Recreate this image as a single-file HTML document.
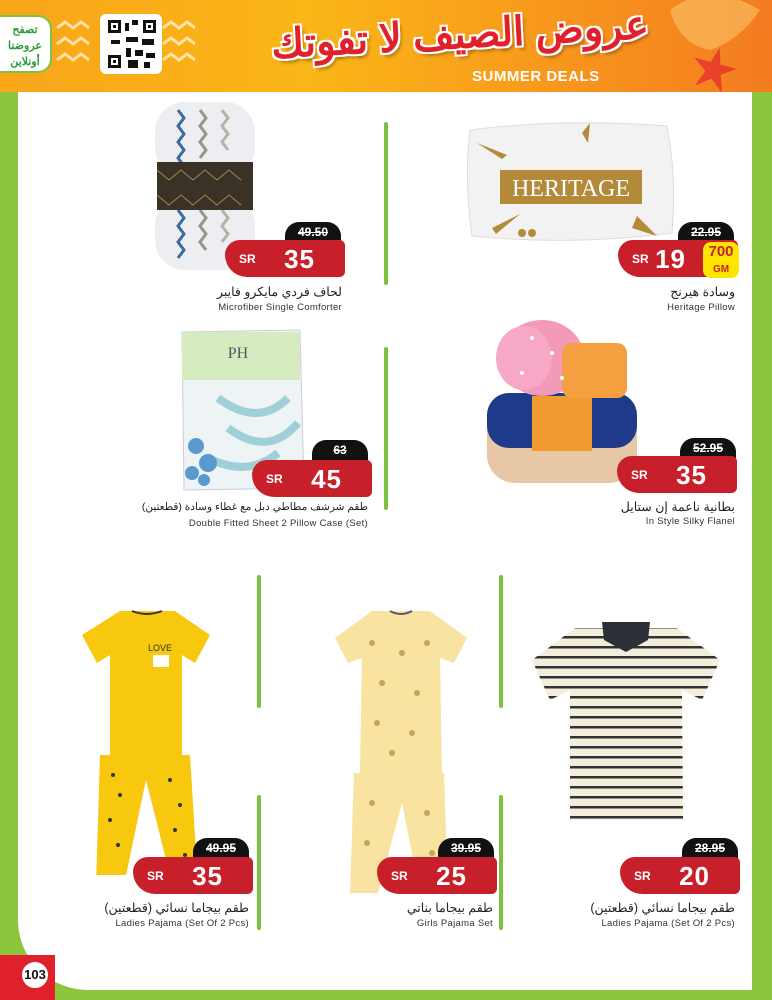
<!DOCTYPE html>
<html><head><meta charset="utf-8"><style>
*{margin:0;padding:0;box-sizing:border-box}
body{width:772px;height:1000px;position:relative;overflow:hidden;background:#8cc63f;font-family:"Liberation Sans","Noto Sans CJK SC",sans-serif}
.abs{position:absolute}
#hdr{left:0;top:0;width:772px;height:92px;background:linear-gradient(90deg,#f9a51a 0%,#fbb617 40%,#f7941d 75%,#f47b20 100%)}
#main{left:18px;top:92px;width:734px;height:898px;background:#fff;border-bottom-left-radius:70px}
.old{position:absolute;width:56px;height:20px;background:#111;color:#fff;border-radius:14px 14px 0 0;font:bold 12px "Liberation Sans",sans-serif;text-align:center;line-height:21px;text-decoration:line-through}
.red{position:absolute;width:120px;height:37px;background:#c8202a;border-radius:16px 6px 6px 24px;color:#fff}
.red .sr{position:absolute;left:14px;top:12px;font:bold 12px "Liberation Sans",sans-serif}
.red .pr{position:absolute;right:30px;top:4px;font:bold 26px "Liberation Sans",sans-serif;letter-spacing:1px}
.ar{position:absolute;font:12.5px "Liberation Sans","Noto Sans CJK SC",sans-serif;color:#222;direction:rtl;text-align:right;white-space:nowrap}
.en{position:absolute;font:9.5px "Liberation Sans",sans-serif;color:#333;text-align:right;white-space:nowrap;letter-spacing:.3px}
.dv{position:absolute;width:4px;background:#7cc242;border-radius:2px}
</style></head><body>
<div id="hdr" class="abs">
 <svg class="abs" style="left:650px;top:0" width="122" height="92"><g fill="#fbc56a" opacity=".6"><path d="M20 10 Q60 -20 110 10 Q90 40 60 50 Q30 45 20 10Z"/></g></svg>
 <div class="abs" style="left:0;top:15px;width:52px;height:58px;background:#fff;border:2px solid #7cc242;border-left:none;border-radius:0 14px 14px 0;color:#2e9a3a;font:bold 11px 'Liberation Sans','Noto Sans CJK SC',sans-serif;text-align:center;line-height:16px;padding-top:5px;direction:rtl">تصفح<br>عروضنا<br>أونلاين</div>
 <svg class="abs" style="left:55px;top:20px" width="150" height="50"><g fill="none" stroke="#fde3a6" stroke-width="3"><path d="M2 8 l8 -6 8 6 8 -6 8 6"/><path d="M2 24 l8 -6 8 6 8 -6 8 6"/><path d="M2 40 l8 -6 8 6 8 -6 8 6"/><path d="M108 8 l8 -6 8 6 8 -6 8 6"/><path d="M108 24 l8 -6 8 6 8 -6 8 6"/><path d="M108 40 l8 -6 8 6 8 -6 8 6"/></g></svg>
 <div class="abs" style="left:100px;top:14px;width:62px;height:60px;background:#fff;border-radius:6px"></div>
 <svg class="abs" style="left:108px;top:20px" width="48" height="48"><rect width="48" height="48" fill="#fff"/><g fill="#111"><rect x="0" y="0" width="13" height="13"/><rect x="35" y="0" width="13" height="13"/><rect x="0" y="35" width="13" height="13"/><rect x="17" y="3" width="4" height="8"/><rect x="24" y="0" width="6" height="5"/><rect x="18" y="17" width="12" height="5"/><rect x="3" y="20" width="9" height="4"/><rect x="34" y="19" width="12" height="6"/><rect x="18" y="28" width="5" height="9"/><rect x="27" y="30" width="8" height="6"/><rect x="38" y="33" width="9" height="5"/><rect x="20" y="40" width="10" height="8"/><rect x="36" y="42" width="6" height="6"/></g><g fill="#fff"><rect x="3" y="3" width="7" height="7"/><rect x="38" y="3" width="7" height="7"/><rect x="3" y="38" width="7" height="7"/></g><g fill="#111"><rect x="5" y="5" width="3" height="3"/><rect x="40" y="5" width="3" height="3"/><rect x="5" y="40" width="3" height="3"/></g></svg>
 <div class="abs" style="left:270px;top:12px;width:380px;text-align:center;color:#e0202a;font:bold 40px 'Liberation Sans','Noto Sans CJK SC',sans-serif;direction:rtl;text-shadow:2px 2px 0 #fff,-2px -2px 0 #fff,2px -2px 0 #fff,-2px 2px 0 #fff,3px 4px 3px rgba(0,0,0,.3);transform:rotate(-3deg)">عروض الصيف لا تفوتك</div>
 <div class="abs" style="left:472px;top:68px;color:#fff;font:bold 15px 'Liberation Sans',sans-serif;letter-spacing:.5px">SUMMER DEALS</div>
 <svg class="abs" style="left:690px;top:45px" width="50" height="47"><path d="M24 2 L29 18 L46 18 L32 28 L38 45 L24 34 L10 45 L16 28 L2 18 L19 18Z" fill="#e8432a" transform="rotate(15 24 24)"/></svg>
</div>
<div id="main" class="abs"></div>

<div class="dv" style="left:384px;top:122px;height:163px"></div>
<div class="dv" style="left:384px;top:347px;height:163px"></div>
<div class="dv" style="left:257px;top:575px;height:133px"></div>
<div class="dv" style="left:257px;top:795px;height:135px"></div>
<div class="dv" style="left:499px;top:575px;height:133px"></div>
<div class="dv" style="left:499px;top:795px;height:135px"></div>

<svg class="abs" style="left:150px;top:100px" width="110" height="172">
 <rect x="5" y="2" width="100" height="75" rx="30" fill="#eceef2"/>
 <rect x="5" y="95" width="100" height="75" rx="30" fill="#eceef2"/>
 <g fill="none" stroke-width="3"><path d="M28 10 l6 8 -6 8 6 8 -6 8 6 8 -6 8 6 8" stroke="#3c6d9a"/><path d="M50 10 l6 8 -6 8 6 8 -6 8 6 8 -6 8" stroke="#9a9486"/><path d="M72 10 l6 8 -6 8 6 8 -6 8 6 8" stroke="#b8b2a6"/><path d="M28 110 l6 8 -6 8 6 8 -6 8 6 8 -6 8" stroke="#3c6d9a"/><path d="M50 110 l6 8 -6 8 6 8 -6 8 6 8" stroke="#9a9486"/><path d="M72 110 l6 8 -6 8 6 8 -6 8" stroke="#b8b2a6"/></g>
 <rect x="7" y="62" width="96" height="48" fill="#3a3226"/>
 <path d="M7 70 l12 10 12 -10 12 10 12 -10 12 10 12 -10 12 10 M7 95 l12 10 12 -10 12 10 12 -10 12 10 12 -10 12 10" stroke="#a08a50" fill="none"/>
</svg>
<div class="old" style="left:285px;top:222px">49.50</div>
<div class="red" style="left:225px;top:240px"><span class="sr">SR</span><span class="pr">35</span></div>
<div class="ar" style="right:430px;top:284px">لحاف فردي مايكرو فايبر</div>
<div class="en" style="right:430px;top:302px">Microfiber Single Comforter</div>

<svg class="abs" style="left:462px;top:118px" width="218" height="130">
 <path d="M8 12 Q100 0 205 8 Q215 60 210 115 Q110 128 10 118 Q2 60 8 12Z" fill="#f2f2f2" stroke="#ddd"/>
 <rect x="38" y="52" width="142" height="34" fill="#b38a3a"/>
 <text x="109" y="78" text-anchor="middle" font-family="Liberation Serif" font-size="24" fill="#fff">HERITAGE</text>
 <g fill="#b38a3a"><path d="M15 25 l30 12 -5 4Z"/><path d="M120 15 l8 -10 -2 20Z"/><path d="M170 110 l25 8 -20 -20Z"/><path d="M30 110 l28 -14 -24 20Z"/><circle cx="60" cy="115" r="4"/><circle cx="70" cy="115" r="4"/></g>
</svg>
<div class="old" style="left:678px;top:222px">22.95</div>
<div class="red" style="left:618px;top:240px"><span class="sr">SR</span><span class="pr" style="right:52px">19</span></div>
<div class="abs" style="left:703px;top:242px;width:36px;height:36px;background:#ffe600;border-radius:8px;color:#c8202a;text-align:center;font:bold 15px 'Liberation Sans',sans-serif;line-height:16px;padding-top:2px">700<br><span style="font-size:10px">GM</span></div>
<div class="ar" style="right:37px;top:284px">وسادة هيرنج</div>
<div class="en" style="right:37px;top:302px">Heritage Pillow</div>

<svg class="abs" style="left:178px;top:328px" width="130" height="165">
 <path d="M4 4 L122 2 L126 160 L6 162Z" fill="#eef3f6" stroke="#ccd"/>
 <rect x="4" y="4" width="118" height="48" fill="#d6ecc0"/>
 <text x="60" y="30" text-anchor="middle" font-family="Liberation Serif" font-size="16" fill="#556">PH</text>
 <path d="M40 70 Q80 100 110 70 M50 100 Q90 130 120 95 M30 130 Q70 150 100 125" stroke="#9fd0d8" stroke-width="8" fill="none"/>
 <g fill="#5a9ad0"><circle cx="18" cy="118" r="8"/><circle cx="30" cy="135" r="9"/><circle cx="14" cy="145" r="7"/><circle cx="26" cy="152" r="6"/></g>
</svg>
<div class="old" style="left:312px;top:440px">63</div>
<div class="red" style="left:252px;top:460px"><span class="sr">SR</span><span class="pr">45</span></div>
<div class="ar" style="right:404px;top:501px;font-size:10.5px">طقم شرشف مطاطي دبل مع غطاء وسادة (قطعتين)</div>
<div class="en" style="right:404px;top:518px">Double Fitted Sheet 2 Pillow Case (Set)</div>

<svg class="abs" style="left:462px;top:318px" width="180" height="170">
 <rect x="25" y="75" width="150" height="90" rx="28" fill="#e8c7a6"/>
 <rect x="25" y="75" width="150" height="55" rx="22" fill="#1f3a8a"/>
 <rect x="70" y="78" width="60" height="55" fill="#f09a30"/>
 <ellipse cx="80" cy="40" rx="42" ry="38" fill="#f39ab8"/>
 <rect x="100" y="25" width="65" height="55" rx="10" fill="#f5a040"/>
 <ellipse cx="62" cy="40" rx="28" ry="32" fill="#f6a8c6"/>
 <g fill="#fff"><circle cx="70" cy="20" r="2"/><circle cx="90" cy="35" r="2"/><circle cx="60" cy="55" r="2"/><circle cx="100" cy="60" r="2"/></g>
</svg>
<div class="old" style="left:680px;top:438px">52.95</div>
<div class="red" style="left:617px;top:456px"><span class="sr">SR</span><span class="pr">35</span></div>
<div class="ar" style="right:37px;top:499px">بطانية ناعمة إن ستايل</div>
<div class="en" style="right:37px;top:516px">In Style Silky Flanel</div>

<svg class="abs" style="left:80px;top:605px" width="135" height="270">
 <path d="M40 6 L95 6 L130 30 L115 58 L102 50 L102 150 L30 150 L30 50 L17 58 L2 30Z" fill="#f8c80f"/>
 <path d="M52 6 Q67 12 82 6" stroke="#333" stroke-width="2" fill="none"/>
 <rect x="73" y="50" width="16" height="12" fill="#fff"/>
 <text x="80" y="46" font-size="9" text-anchor="middle" fill="#333">LOVE</text>
 <path d="M20 150 L110 150 L118 280 L92 278 L66 175 L44 280 L16 282Z" fill="#f8c80f"/>
 <g fill="#333"><circle cx="33" cy="170" r="2"/><circle cx="40" cy="190" r="2"/><circle cx="30" cy="215" r="2"/><circle cx="38" cy="240" r="2"/><circle cx="90" cy="175" r="2"/><circle cx="100" cy="200" r="2"/><circle cx="95" cy="225" r="2"/><circle cx="105" cy="250" r="2"/></g>
</svg>
<div class="old" style="left:193px;top:838px">49.95</div>
<div class="red" style="left:133px;top:857px"><span class="sr">SR</span><span class="pr">35</span></div>
<div class="ar" style="right:523px;top:900px">طقم بيجاما نسائي (قطعتين)</div>
<div class="en" style="right:523px;top:918px">Ladies Pajama (Set Of 2 Pcs)</div>

<svg class="abs" style="left:332px;top:603px" width="140" height="290">
 <path d="M40 8 L98 8 L135 35 L122 60 L108 55 L110 170 L28 170 L30 55 L16 60 L3 35Z" fill="#f8e3a0"/>
 <path d="M58 8 Q69 14 80 8" stroke="#557" stroke-width="2" fill="none"/>
 <path d="M22 170 L112 170 L116 290 L88 290 L70 200 L46 290 L18 290Z" fill="#f8e3a0"/>
 <g fill="#c9a35a"><circle cx="40" cy="40" r="3"/><circle cx="70" cy="50" r="3"/><circle cx="95" cy="40" r="3"/><circle cx="50" cy="80" r="3"/><circle cx="85" cy="90" r="3"/><circle cx="45" cy="120" r="3"/><circle cx="80" cy="130" r="3"/><circle cx="60" cy="150" r="3"/><circle cx="40" cy="200" r="3"/><circle cx="95" cy="210" r="3"/><circle cx="35" cy="240" r="3"/><circle cx="100" cy="250" r="3"/></g>
</svg>
<div class="old" style="left:438px;top:838px">39.95</div>
<div class="red" style="left:377px;top:857px"><span class="sr">SR</span><span class="pr">25</span></div>
<div class="ar" style="right:279px;top:900px">طقم بيجاما بناتي</div>
<div class="en" style="right:279px;top:918px">Girls Pajama Set</div>

<svg class="abs" style="left:530px;top:620px" width="192" height="205">
 <defs><pattern id="st" width="10" height="10" patternUnits="userSpaceOnUse"><rect width="10" height="10" fill="#f3eedc"/><rect y="6" width="10" height="2.5" fill="#333"/></pattern></defs>
 <path d="M45 8 L147 8 L190 40 L172 80 L152 70 L153 200 L40 200 L40 70 L20 80 L2 40Z" fill="url(#st)"/>
 <path d="M72 2 L120 2 L118 20 L96 32 L74 20Z" fill="#2c3138"/>
</svg>
<div class="old" style="left:682px;top:838px">28.95</div>
<div class="red" style="left:620px;top:857px"><span class="sr">SR</span><span class="pr">20</span></div>
<div class="ar" style="right:37px;top:900px">طقم بيجاما نسائي (قطعتين)</div>
<div class="en" style="right:37px;top:918px">Ladies Pajama (Set Of 2 Pcs)</div>

<div class="abs" style="left:0;top:955px;width:55px;height:45px;background:#e0202a"></div>
<div class="abs" style="left:20px;top:960px;width:30px;height:30px;background:#fff;border:2px solid #e0202a;border-radius:50%;font:bold 13px 'Liberation Sans',sans-serif;text-align:center;line-height:26px;color:#111">103</div>
</body></html>
